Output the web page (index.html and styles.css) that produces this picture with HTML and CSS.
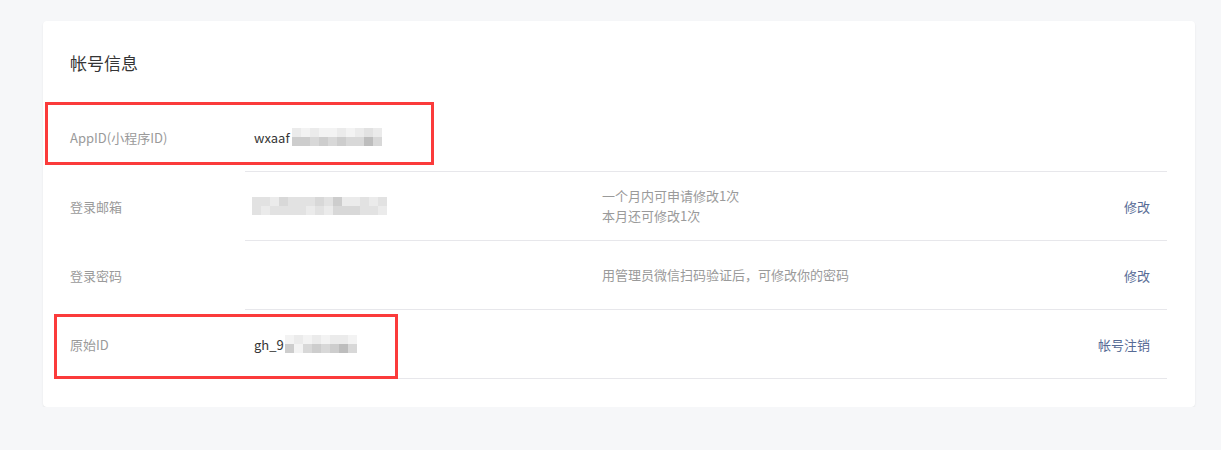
FILE: index.html
```html
<!DOCTYPE html>
<html>
<head>
	<meta charset="utf-8">
	<title>帐号信息</title>
	<link rel="stylesheet" href="styles.css">
</head>
<body>
  <div class="page">
    <div class="card">
      <h2 class="card-title">帐号信息</h2>

      <div class="info-list">
        <div class="info-row">
          <div class="info-label">AppID(小程序ID)</div>
          <div class="info-main">
            <div class="info-value">wxaaf<span class="mask mask-id">
              <span class="m-row"><i class="c2"></i><i class="c1"></i><i class="c2"></i><i class="c1"></i><i class="c1"></i><i class="c2"></i><i class="c1"></i><i class="c2"></i><i class="c3"></i><i class="c2"></i></span>
              <span class="m-row"><i class="c5"></i><i class="c5"></i><i class="c4"></i><i class="c5"></i><i class="c4"></i><i class="c5"></i><i class="c4"></i><i class="c4"></i><i class="c6"></i><i class="c4"></i></span>
            </span></div>
            <div class="info-desc"></div>
            <div class="info-action"></div>
          </div>
        </div>

        <div class="info-row">
          <div class="info-label">登录邮箱</div>
          <div class="info-main">
            <div class="info-value"><span class="mask mask-mail">
              <span class="m-row"><i class="c3"></i><i class="c3"></i><i class="c2"></i><i class="c4"></i><i class="c3"></i><i class="c3"></i><i class="c3"></i><i class="c4"></i><i class="c3"></i><i class="c5"></i><i class="c2"></i><i class="c2"></i><i class="c3"></i><i class="c2"></i><i class="c3"></i></span>
              <span class="m-row"><i class="c3"></i><i class="c2"></i><i class="c3"></i><i class="c3"></i><i class="c3"></i><i class="c3"></i><i class="c2"></i><i class="c3"></i><i class="c2"></i><i class="c4"></i><i class="c4"></i><i class="c4"></i><i class="c3"></i><i class="c3"></i><i class="c2"></i></span>
            </span></div>
            <div class="info-desc">一个月内可申请修改1次<br>本月还可修改1次</div>
            <div class="info-action"><a href="#">修改</a></div>
          </div>
        </div>

        <div class="info-row">
          <div class="info-label">登录密码</div>
          <div class="info-main">
            <div class="info-value"></div>
            <div class="info-desc">用管理员微信扫码验证后，可修改你的密码</div>
            <div class="info-action"><a href="#">修改</a></div>
          </div>
        </div>

        <div class="info-row">
          <div class="info-label">原始ID</div>
          <div class="info-main">
            <div class="info-value">gh_9<span class="mask mask-gh">
              <span class="m-row"><i class="c1"></i><i class="c2"></i><i class="c1"></i><i class="c2"></i><i class="c1"></i><i class="c2"></i><i class="c2"></i><i class="c1"></i></span>
              <span class="m-row"><i class="c5"></i><i class="c1"></i><i class="c4"></i><i class="c5"></i><i class="c4"></i><i class="c5"></i><i class="c6"></i><i class="c4"></i></span>
            </span></div>
            <div class="info-desc"></div>
            <div class="info-action"><a href="#">帐号注销</a></div>
          </div>
        </div>
      </div>

      <!-- annotation boxes -->
      <div class="mark mark-appid"></div>
      <div class="mark mark-origin"></div>
    </div>
  </div>
</body>
</html>
```

FILE: styles.css
```css
html, body{
	margin:0;
	padding:0;
	background:#f6f7f9;
	font-family:"Noto Sans CJK SC", "Liberation Sans", sans-serif;
	font-size:13px;
	color:#353535;
}

.page{
	padding:21px 26px 0 43px;
}

	.card{
		position:relative;
		width:1152px;
		box-sizing:border-box;
		padding:30px 28px 28px 27px;
		background:#fff;
		border-radius:4px;
		box-shadow:0 1px 2px rgba(0,0,0,.08);
	}

		.card-title{
			margin:0 0 28px;
			font-size:17px;
			font-weight:normal;
			line-height:24px;
			color:#353535;
		}

		.info-row{
			display:grid;
			grid-template-columns:175px 1fr;
		}

			.info-label{
				display:flex;
				align-items:center;
				color:#9a9a9a;
			}

			.info-main{
				display:grid;
				grid-template-columns:357px 1fr auto;
				align-items:center;
				height:68px;
				border-bottom:1px solid #e7e7eb;
				padding-right:17px;
			}

				.info-value{
					display:flex;
					align-items:center;
					padding-left:9px;
					color:#353535;
				}

				.info-desc{
					color:#9a9a9a;
					line-height:20px;
				}

				.info-action a{
					color:#576b95;
					text-decoration:none;
				}

/* pixelated blur over private values */
.mask{
	display:inline-flex;
	flex-direction:column;
}

	.m-row{
		display:flex;
	}

		.m-row i{
			display:block;
			width:9px;
			height:9px;
		}

.mask-id{ margin-left:2px; }
.mask-mail{ margin-left:-2px; }
.mask-gh{ margin-left:1px; }

.c1{ background:#f3f3f3; }
.c2{ background:#ebebeb; }
.c3{ background:#e2e2e2; }
.c4{ background:#d8d8d8; }
.c5{ background:#cdcdcd; }
.c6{ background:#bdbdbd; }

/* red annotation frames */
.mark{
	position:absolute;
	border:3px solid #fb3b3b;
	box-sizing:border-box;
}

	.mark-appid{
		left:2px;
		top:81px;
		width:389px;
		height:63px;
	}

	.mark-origin{
		left:11px;
		top:293px;
		width:344px;
		height:65px;
	}
```
